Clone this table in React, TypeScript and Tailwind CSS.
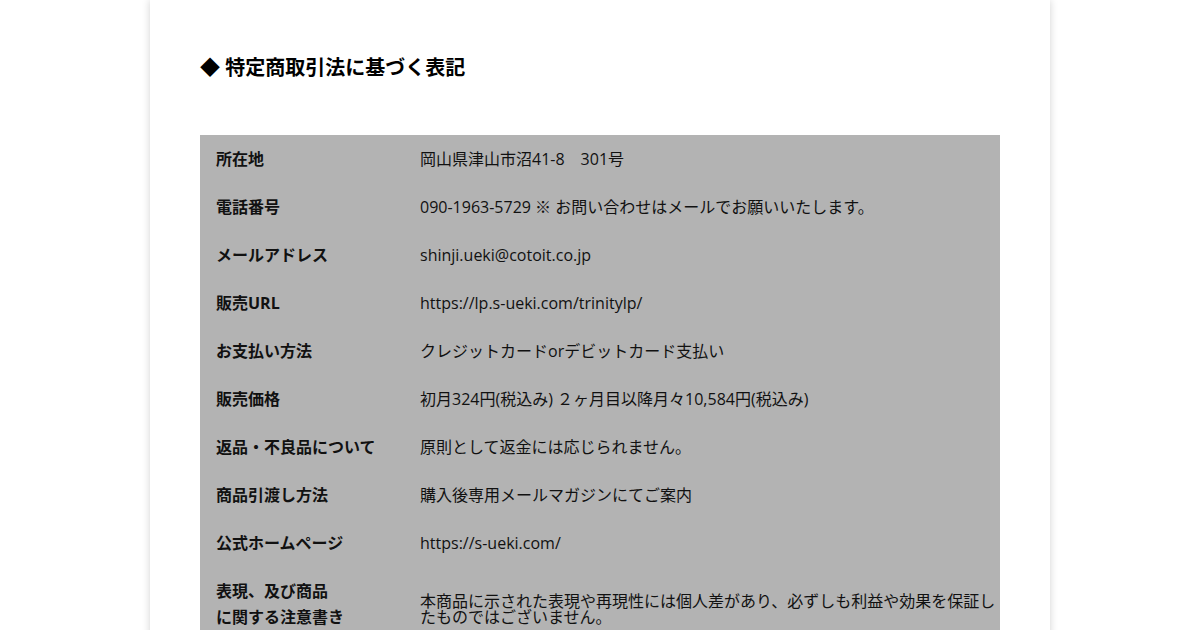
import React from "react";

const rows: { label: React.ReactNode; value: React.ReactNode }[] = [
  { label: "所在地", value: "岡山県津山市沼41-8　301号" },
  { label: "電話番号", value: "090-1963-5729 ※ お問い合わせはメールでお願いいたします。" },
  { label: "メールアドレス", value: "shinji.ueki@cotoit.co.jp" },
  { label: "販売URL", value: "https://lp.s-ueki.com/trinitylp/" },
  { label: "お支払い方法", value: "クレジットカードorデビットカード支払い" },
  { label: "販売価格", value: "初月324円(税込み) ２ヶ月目以降月々10,584円(税込み)" },
  { label: "返品・不良品について", value: "原則として返金には応じられません。" },
  { label: "商品引渡し方法", value: "購入後専用メールマガジンにてご案内" },
  { label: "公式ホームページ", value: "https://s-ueki.com/" },
];

export default function App() {
  return (
    <div
      className="min-h-screen bg-white flex justify-center text-[#111]"
      style={{ fontFamily: "'Open Sans','Noto Sans CJK JP',sans-serif" }}
    >
      <div className="w-[900px] bg-white shadow-[0_0_8px_rgba(0,0,0,0.18)] px-[50px] pt-[52px] pb-[60px]">
        <h2 className="text-[20px] font-bold leading-[32px] text-black">◆ 特定商取引法に基づく表記</h2>
        <div className="mt-[51px] bg-[#b3b3b3] text-[16px]">
          {rows.map((r, i) => (
            <div key={i} className="grid grid-cols-[204px_1fr] h-[48px] items-center">
              <div className="pl-4 font-bold leading-[26px]">{r.label}</div>
              <div className="pl-4 leading-[26px]">{r.value}</div>
            </div>
          ))}
          <div className="grid grid-cols-[204px_1fr] pb-[12px]">
            <div className="pl-4 pt-[11px] font-bold leading-[26px]">
              表現、及び商品
              <br />
              に関する注意書き
            </div>
            <div className="pl-4 pt-[26px] leading-[16px]">
              本商品に示された表現や再現性には個人差があり、必ずしも利益や効果を保証したものではございません。
            </div>
          </div>
        </div>
      </div>
    </div>
  );
}
